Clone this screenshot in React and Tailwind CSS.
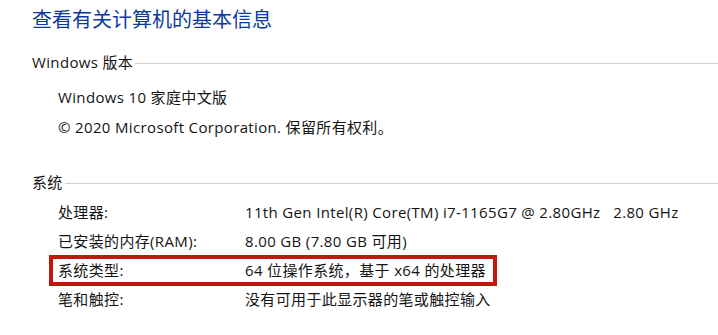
export default function App() {
  const rows = [
    ["处理器:", "11th Gen Intel(R) Core(TM) i7-1165G7 @ 2.80GHz   2.80 GHz"],
    ["已安装的内存(RAM):", "8.00 GB (7.80 GB 可用)"],
    ["系统类型:", "64 位操作系统，基于 x64 的处理器", true],
    ["笔和触控:", "没有可用于此显示器的笔或触控输入"],
  ];
  return (
    <div className="w-[718px] h-[335px] bg-white overflow-hidden pl-[32px] pt-[6px] text-[15px] tracking-[0.35px] text-[#141414] font-['Open_Sans','Noto_Sans_CJK_SC',sans-serif]">
      <h1 className="text-[20px] leading-[28px] tracking-normal text-[#0c3a9c]">查看有关计算机的基本信息</h1>
      <div className="mt-[14px] flex items-center h-[28px]">
        <span className="whitespace-pre">Windows 版本</span>
        <div className="flex-1 border-t border-[#d0d0d0] ml-[2px] mt-[3px]" />
      </div>
      <div className="pl-[26px] mt-[6px] leading-[30px]">
        <div>Windows 10 家庭中文版</div>
        <div>© 2020 Microsoft Corporation. 保留所有权利。</div>
      </div>
      <div className="mt-[26px] flex items-center h-[28px]">
        <span>系统</span>
        <div className="flex-1 border-t border-[#d0d0d0] ml-[2px] mt-[2px]" />
      </div>
      <div className="pl-[26px] mt-[2px]">
        {rows.map(([k, v, hl]) => (
          <div key={k} className="relative flex h-[29px] items-center">
            {hl && (
              <div className="absolute -left-[9px] -top-[1px] w-[448px] h-[31px] border-4 border-[#c1170d]" />
            )}
            <span className="w-[187px] shrink-0">{k}</span>
            <span className="whitespace-pre">{v}</span>
          </div>
        ))}
      </div>
    </div>
  );
}
